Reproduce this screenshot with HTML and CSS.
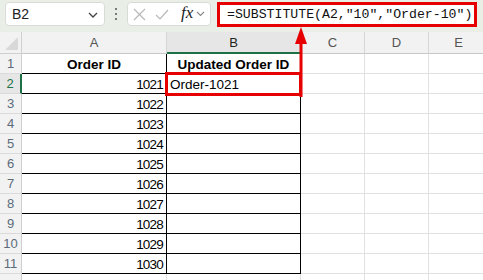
FILE: index.html
```html
<!DOCTYPE html>
<html>
<head>
<meta charset="utf-8">
<link rel="stylesheet" href="styles.css">
</head>
<body>
<div class="app">
  <div class="fbar">
    <div class="namebox">
      <span class="ref">B2</span>
      <svg class="chev" width="10" height="6" viewBox="0 0 10 6"><path d="M1 1 L5 5 L9 1" fill="none" stroke="#444" stroke-width="1.3"/></svg>
    </div>
    <div class="dots"><i></i><i></i><i></i></div>
    <div class="fnbox">
      <svg class="ico" width="13" height="13" viewBox="0 0 13 13"><path d="M1 1 L12 12 M12 1 L1 12" stroke="#b8b8b8" stroke-width="1.2" fill="none"/></svg>
      <svg class="ico" width="14" height="11" viewBox="0 0 14 11"><path d="M1 6 L5 10 L13 1" stroke="#b8b8b8" stroke-width="1.2" fill="none"/></svg>
      <span class="fx">fx</span>
      <svg class="chev2" width="9" height="6" viewBox="0 0 9 6"><path d="M1 1 L4.5 4.5 L8 1" fill="none" stroke="#888" stroke-width="1.1"/></svg>
    </div>
    <div class="formula">=SUBSTITUTE(A2,"10","Order-10")</div>
  </div>
  <div class="grid">
    <div class="c corner"><span class="tri"></span></div>
    <div class="c ch">A</div>
    <div class="c ch sel">B</div>
    <div class="c ch">C</div>
    <div class="c ch">D</div>
    <div class="c ch">E</div>

    <div class="c rh">1</div>
    <div class="c t a hd">Order ID</div>
    <div class="c t b hd">Updated Order ID</div>
    <div class="c"></div><div class="c"></div><div class="c"></div>

    <div class="c rh rsel">2</div>
    <div class="c t a num">1021</div>
    <div class="c t b txt">Order-1021</div>
    <div class="c"></div><div class="c"></div><div class="c"></div>

    <div class="c rh">3</div>
    <div class="c t a num">1022</div>
    <div class="c t b"></div>
    <div class="c"></div><div class="c"></div><div class="c"></div>

    <div class="c rh">4</div>
    <div class="c t a num">1023</div>
    <div class="c t b"></div>
    <div class="c"></div><div class="c"></div><div class="c"></div>

    <div class="c rh">5</div>
    <div class="c t a num">1024</div>
    <div class="c t b"></div>
    <div class="c"></div><div class="c"></div><div class="c"></div>

    <div class="c rh">6</div>
    <div class="c t a num">1025</div>
    <div class="c t b"></div>
    <div class="c"></div><div class="c"></div><div class="c"></div>

    <div class="c rh">7</div>
    <div class="c t a num">1026</div>
    <div class="c t b"></div>
    <div class="c"></div><div class="c"></div><div class="c"></div>

    <div class="c rh">8</div>
    <div class="c t a num">1027</div>
    <div class="c t b"></div>
    <div class="c"></div><div class="c"></div><div class="c"></div>

    <div class="c rh">9</div>
    <div class="c t a num">1028</div>
    <div class="c t b"></div>
    <div class="c"></div><div class="c"></div><div class="c"></div>

    <div class="c rh">10</div>
    <div class="c t a num">1029</div>
    <div class="c t b"></div>
    <div class="c"></div><div class="c"></div><div class="c"></div>

    <div class="c rh">11</div>
    <div class="c t a num">1030</div>
    <div class="c t b"></div>
    <div class="c"></div><div class="c"></div><div class="c"></div>

    <div class="c rh"></div>
    <div class="c"></div><div class="c"></div>
    <div class="c"></div><div class="c"></div><div class="c"></div>
  </div>
  <div class="hl"></div>
  <div class="arrow">
    <svg width="14" height="70" viewBox="0 0 14 70"><polygon points="1,17 13,17 7,0" fill="#e60000"/><rect x="5.5" y="16" width="3" height="54" fill="#e60000"/></svg>
  </div>
</div>
</body>
</html>
```
FILE: styles.css
```css
html, body { margin: 0; padding: 0; }
body {
  width: 483px;
  height: 280px;
  overflow: hidden;
  background: #ffffff;
  font-family: "Liberation Sans", Arial, sans-serif;
}
.app { position: relative; width: 483px; height: 280px; }

.fbar {
  height: 32px;
  background: #e9efe6;
  display: flex;
  align-items: flex-start;
  padding-top: 2px;
  box-sizing: border-box;
}
.namebox {
  margin-left: 5px;
  width: 100px;
  height: 24px;
  box-sizing: border-box;
  background: #fff;
  border: 1px solid #d9dcd6;
  border-radius: 4px;
  display: flex;
  align-items: center;
  justify-content: space-between;
  padding: 0 6px 0 6px;
}
.ref { font-size: 14px; color: #222; }
.chev { margin-top: 1px; }
.dots {
  width: 22px;
  height: 24px;
  display: flex;
  flex-direction: column;
  align-items: center;
  justify-content: center;
  gap: 3px;
}
.dots i { display: block; width: 2px; height: 2px; background: #555; border-radius: 1px; }
.fnbox {
  width: 84px;
  height: 24px;
  box-sizing: border-box;
  background: #fff;
  border: 1px solid #d9dcd6;
  border-radius: 4px;
  display: flex;
  align-items: center;
  padding-left: 5px;
  gap: 9px;
}
.ico { flex: none; }
.fx {
  font-family: "Liberation Serif", "Times New Roman", serif;
  font-style: italic;
  font-size: 17px;
  color: #222;
  margin-left: 3px;
  margin-top: -2px;
}
.chev2 { margin-left: -6px; }
.formula {
  margin-left: 6px;
  width: 260px;
  height: 25px;
  box-sizing: border-box;
  border: 3px solid #e60000;
  background: #fff;
  font-family: "Liberation Mono", "Courier New", monospace;
  font-size: 13.2px;
  color: #111;
  padding-left: 7px;
  line-height: 19px;
  white-space: nowrap;
}

.grid {
  display: grid;
  grid-template-columns: 22px 145px 134px 64px 64px 60px;
  grid-template-rows: 22px;
  grid-auto-rows: 20px;
}
.c {
  box-sizing: border-box;
  border-right: 1px solid #e1e1e1;
  border-bottom: 1px solid #e1e1e1;
  font-size: 13.5px;
  color: #000;
  white-space: nowrap;
  overflow: hidden;
}
.corner {
  background: #f2f2f2;
  border-right: 1px solid #cfcfcf;
  border-bottom: 1px solid #cfcfcf;
  position: relative;
}
.tri {
  position: absolute;
  right: 3px;
  bottom: 3px;
  width: 0; height: 0;
  border-left: 13px solid transparent;
  border-bottom: 13px solid #d8d8d8;
}
.ch {
  background: #f2f2f2;
  border-right: 1px solid #d6d6d6;
  border-bottom: 1px solid #c8c8c8;
  color: #555;
  text-align: center;
  line-height: 21px;
  font-size: 13px;
}
.ch.sel { background: #e6e6e6; border-bottom: 2px solid #1e7145; color: #222; line-height: 21px; }
.rh {
  background: #f2f2f2;
  border-right: 1px solid #cfcfcf;
  border-bottom: 1px solid #dadada;
  color: #5b6b7a;
  text-align: center;
  line-height: 20px;
  font-size: 13px;
}
.rh.rsel { background: #e6e6e6; border-right: 2px solid #1e7145; color: #1e7145; }
.t.a, .t.b { border-right: 1px solid #000; border-bottom: 1px solid #000; }
.hd {
  font-weight: bold;
  font-size: 13.5px;
  text-align: center;
  line-height: 21px;
}
.num { text-align: right; padding-right: 3px; line-height: 21px; letter-spacing: -0.8px; }
.txt { padding-left: 3px; line-height: 21px; }

.hl {
  position: absolute;
  left: 165px;
  top: 72px;
  width: 137px;
  height: 24px;
  box-sizing: border-box;
  border: 3px solid #e60000;
}
.arrow {
  position: absolute;
  left: 294px;
  top: 27px;
  width: 14px;
  height: 70px;
}
```
